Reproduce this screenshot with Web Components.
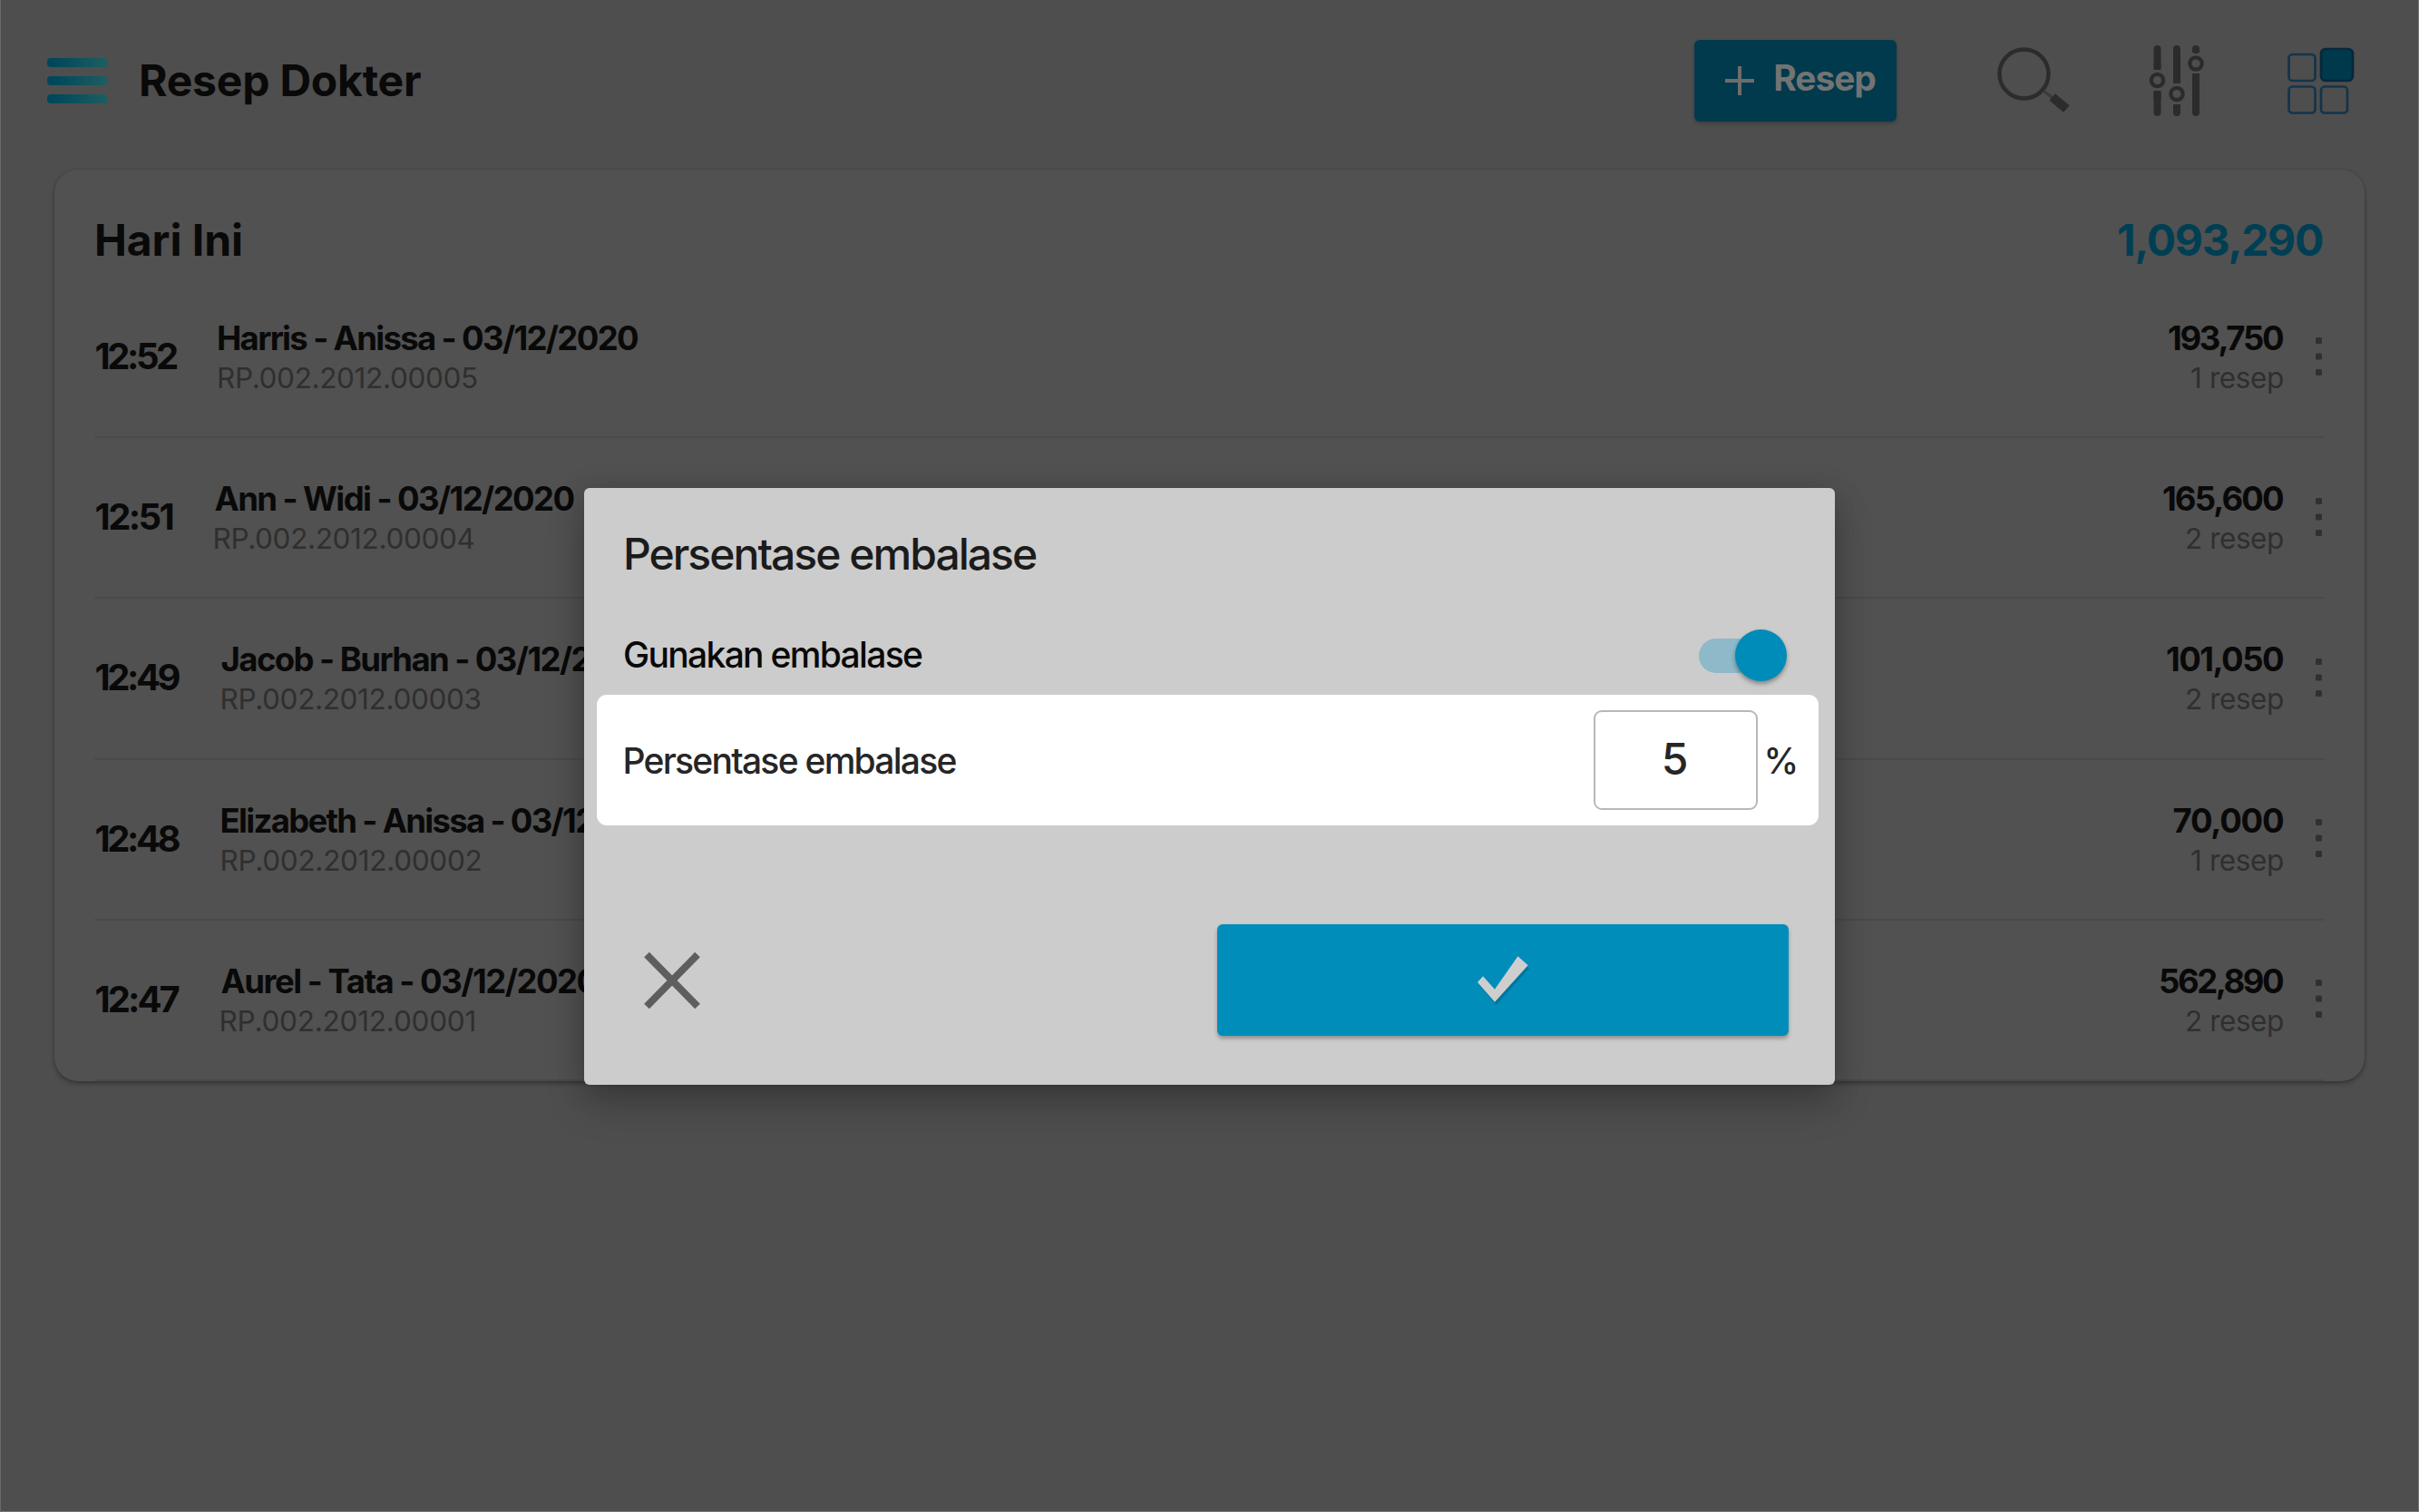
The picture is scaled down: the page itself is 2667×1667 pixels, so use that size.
<!DOCTYPE html>
<html lang="id">
<head>
<meta charset="utf-8">
<title>Resep Dokter</title>
<style>
    body {
        margin: 0;
        background: #4e4e4e;
        color: #090909;
        font-family: Inter, "Open Sans", sans-serif;
        overflow: hidden;
    }
</style>
</head>
<body>
<resep-app></resep-app>

<script>
"use strict";

// shadow rootを作ってマークアップを入れる共通クラス
class BaseElement extends HTMLElement {
    connectedCallback() {
        if (this.shadowRoot) return;
        this.attachShadow({mode: "open"});
        this.shadowRoot.innerHTML = this.render();
        this.ready();
    }

    ready() {}
}


// 文字列を指定した幅にぴったり収めるラベル
// w属性は文字の左端から右端までの幅
customElements.define("fit-text", class extends BaseElement {
    render() {
        return `
            <style>
                :host { display: block; flex: none; white-space: nowrap; }
                span { display: block; }
            </style>
            <span><slot></slot></span>`;
    }

    ready() {
        const width = Number(this.getAttribute("w"));
        const text = this.textContent;
        const style = getComputedStyle(this);
        const ctx = document.createElement("canvas").getContext("2d");
        ctx.font = `${style.fontWeight} ${style.fontSize} ${style.fontFamily}`;
        const m = ctx.measureText(text);
        const ink = m.actualBoundingBoxLeft + m.actualBoundingBoxRight;
        const span = this.shadowRoot.querySelector("span");
        this.style.width = `${width}px`;
        span.style.marginLeft = `${m.actualBoundingBoxLeft}px`;
        if (text.length > 1) {
            span.style.letterSpacing = `${(width - ink) / (text.length - 1)}px`;
        }
    }
});


// アイコン
const icons = {
    menu: `<svg width="67" height="50" viewBox="0 0 67 50">
        <defs><linearGradient id="g"><stop offset="0.1" stop-color="#00475b"/><stop offset="1" stop-color="#1d5f60"/></linearGradient></defs>
        <g fill="url(#g)"><rect width="67" height="10" rx="4"/><rect y="20" width="67" height="10" rx="4"/><rect y="40" width="67" height="10" rx="4"/></g></svg>`,
    plus: `<svg width="32" height="32" viewBox="0 0 32 32"><path d="M16 0v32M0 16h32" stroke="#6d6d6d" stroke-width="4"/></svg>`,
    search: `<svg width="80" height="78" viewBox="0 0 80 78">
        <circle cx="29.5" cy="31.5" r="27" fill="none" stroke="#2c2c2c" stroke-width="4.4"/>
        <path d="M51 50l10 8" stroke="#3b3b3b" stroke-width="3"/>
        <path d="M63.8 53.3l16 13-6.8 7.5-15.5-13z" fill="#2c2c2c"/></svg>`,
    sliders: `<svg width="60" height="78" viewBox="0 0 60 78" fill="none" stroke="#2b2b2b">
        <path d="M8.5 4v19M8.5 54v20M30 4v34M30 69v5M51 4v1M51 35v39" stroke-width="8" stroke-linecap="round"/>
        <path d="M8.5 20v7M8.5 50v10M30 30v12M30 65v6M51 4v4M51 31v9" stroke-width="8"/>
        <g stroke-width="4.2"><circle cx="8.5" cy="38.5" r="6.7"/><circle cx="30" cy="53.5" r="6.7"/><circle cx="51" cy="20" r="6.7"/></g></svg>`,
    grid: `<svg width="74" height="74" viewBox="0 0 74 74" fill="none" stroke="#14344b" stroke-width="2.7">
        <rect x="1.5" y="8" width="29" height="29" rx="4"/><rect x="1.5" y="43.5" width="29" height="29" rx="4"/>
        <rect x="37" y="43.5" width="29" height="29" rx="4"/><rect x="37" y="2" width="35" height="35" rx="5" fill="#00394c" stroke="#07283b"/></svg>`,
    dots: `<svg width="7" height="42" viewBox="0 0 7 42" fill="#303030"><rect width="7" height="7" rx="1.5"/><rect y="17.5" width="7" height="7" rx="1.5"/><rect y="35" width="7" height="7" rx="1.5"/></svg>`,
    close: `<svg width="64" height="66" viewBox="0 0 64 66"><path d="M4 4.500l56 57M60 4.500l-56 57" stroke="#5e5e5e" stroke-width="8"/></svg>`,
    check: `<svg width="60" height="56" viewBox="0 0 60 56">
        <path d="M4 33.500l5.500-6L22.500 40 47.500 4 59 14.500 22.500 55z" fill="#00688a" opacity=".65"/>
        <path d="M2 30l6-6.700L21 37.700 46.500 1.300 57.700 11.300 21 51.700z" fill="#cecece"/></svg>`
};

customElements.define("app-icon", class extends BaseElement {
    render() {
        return `
            <style>
                :host { display: block; flex: none; }
                svg { display: block; overflow: visible; }
            </style>
            ${icons[this.getAttribute("name")]}`;
    }
});


// 上部のバー
customElements.define("top-bar", class extends BaseElement {
    render() {
        return `
            <style>
                :host {
                    display: flex;
                    align-items: center;
                    box-sizing: border-box;
                    height: 177px;
                    padding: 0 71px 0 52px;
                }
                .title { margin-left: 37px; padding-top: 1px; font-size: 48px; font-weight: 700; line-height: 60px; }
                button {
                    display: flex;
                    align-items: center;
                    gap: 23px;
                    width: 223px;
                    height: 90px;
                    margin: 0 111px 0 auto;
                    padding: 0 0 0 34px;
                    border: 0;
                    border-radius: 6px;
                    background: #003a4c;
                    box-shadow: 0 2px 4px rgba(0, 0, 0, .25);
                    color: #737373;
                    font: 700 39px/48px Inter, sans-serif;
                }
                .label { margin-top: -5px; }
                .sliders { margin-left: 88px; }
                .grid { margin-left: 92px; }
            </style>
            <app-icon name="menu"></app-icon>
            <fit-text class="title" w="308">Resep Dokter</fit-text>
            <button><app-icon name="plus"></app-icon><fit-text class="label" w="111">Resep</fit-text></button>
            <app-icon name="search"></app-icon>
            <app-icon class="sliders" name="sliders"></app-icon>
            <app-icon class="grid" name="grid"></app-icon>`;
    }
});


// 一日分のカード
customElements.define("day-card", class extends BaseElement {
    render() {
        return `
            <style>
                :host {
                    display: block;
                    box-sizing: border-box;
                    height: 1005px;
                    margin: 10px 60px 0;
                    padding: 0 44px;
                    border-radius: 26px;
                    background: #515151;
                    box-shadow: 0 3px 5px rgba(0, 0, 0, .28), 0 0 3px rgba(0, 0, 0, .15);
                }
                header {
                    display: flex;
                    justify-content: space-between;
                    box-sizing: border-box;
                    height: 119px;
                    padding: 47px 2px 0 3px;
                    font-size: 48px;
                    font-weight: 700;
                    line-height: 61px;
                }
                .total { color: #003f53; }
            </style>
            <header>
                <fit-text w="159">Hari Ini</fit-text>
                <fit-text class="total" w="225">1,093,290</fit-text>
            </header>
            <slot></slot>`;
    }
});


// 処方箋の行
customElements.define("resep-row", class extends BaseElement {
    render() {
        // 各値は「文字列|幅」の形
        const label = (name) => {
            const [text, w] = this.getAttribute(name).split("|");
            return `<fit-text class="${name}" w="${w}">${text}</fit-text>`;
        };
        return `
            <style>
                :host {
                    display: flex;
                    box-sizing: border-box;
                    height: 177.2px;
                    padding: 45px 3px 0 1.5px;
                    border-bottom: 2px solid #4a4a4a;
                    line-height: 44px;
                }
                .time { font-size: 40px; font-weight: 700; line-height: 84px; }
                .info { margin-left: 46px; }
                .name, .amount { font-size: 36.5px; font-weight: 700; }
                .code, .count { font-size: 31.5px; color: #2f2f2f; }
                .sum { display: flex; flex-direction: column; align-items: flex-end; margin-left: auto; }
                app-icon { margin: 20.5px 0 0 36px; }
            </style>
            ${label("time")}
            <div class="info">${label("name")}${label("code")}</div>
            <div class="sum">${label("amount")}${label("count")}</div>
            <app-icon name="dots"></app-icon>`;
    }
});


// スイッチ
customElements.define("toggle-switch", class extends BaseElement {
    render() {
        return `
            <style>
                :host {
                    display: flex;
                    align-items: center;
                    width: 97px;
                    height: 57px;
                }
                .track { flex: 1; height: 38px; margin-right: -30px; border-radius: 19px; background: #8db9c8; }
                .thumb {
                    width: 57px;
                    height: 57px;
                    border-radius: 50%;
                    background: #008cb8;
                    box-shadow: 0 3px 5px rgba(0, 0, 0, .35);
                }
            </style>
            <div class="track"></div><div class="thumb"></div>`;
    }
});


// 手前に出るダイアログ
customElements.define("embalase-dialog", class extends BaseElement {
    render() {
        return `
            <style>
                :host {
                    position: absolute;
                    left: 644px;
                    top: 538px;
                    box-sizing: border-box;
                    width: 1379px;
                    height: 658px;
                    border-radius: 6px;
                    background: #ccc;
                    box-shadow: 0 22px 44px rgba(0, 0, 0, .2), 0 4px 34px rgba(0, 0, 0, .16);
                }
                h2 { margin: 0; padding: 42px 0 0 46px; color: #1b1b1b; font-size: 48px; font-weight: 500; line-height: 61px; }
                .line { display: flex; align-items: center; justify-content: space-between; font-size: 39px; font-weight: 500; }
                .use { height: 57px; margin: 53px 53.5px 0 45px; }
                .use fit-text { margin-top: -3px; }
                .percent {
                    box-sizing: border-box;
                    width: 1347px;
                    height: 144px;
                    margin: 15px 0 0 13.5px;
                    padding: 0 25px 0 32px;
                    border-radius: 11px;
                    background: #fff;
                    color: #262626;
                }
                .field { display: flex; align-items: center; gap: 11px; }
                .box {
                    display: flex;
                    align-items: center;
                    justify-content: center;
                    box-sizing: border-box;
                    width: 180.5px;
                    height: 110px;
                    padding-bottom: 3px;
                    border: 2px solid #b8b8b8;
                    border-radius: 9px;
                    font-size: 48px;
                }
                .actions {
                    display: flex;
                    align-items: center;
                    justify-content: space-between;
                    height: 123px;
                    margin: 109px 51.5px 0 64.5px;
                }
                .ok {
                    display: flex;
                    align-items: center;
                    justify-content: center;
                    width: 630px;
                    height: 123px;
                    padding: 0;
                    border: 0;
                    border-radius: 6px;
                    background: #008db9;
                    box-shadow: 0 3px 4px rgba(0, 0, 0, .3);
                }
            </style>
            <h2><fit-text w="453">Persentase embalase</fit-text></h2>
            <div class="line use">
                <fit-text w="328">Gunakan embalase</fit-text>
                <toggle-switch></toggle-switch>
            </div>
            <div class="line percent">
                <fit-text w="365">Persentase embalase</fit-text>
                <div class="field">
                    <div class="box"><fit-text w="25">5</fit-text></div>
                    <fit-text w="31">%</fit-text>
                </div>
            </div>
            <div class="actions">
                <app-icon name="close"></app-icon>
                <button class="ok"><app-icon name="check"></app-icon></button>
            </div>`;
    }
});


// 画面全体
customElements.define("resep-app", class extends BaseElement {
    render() {
        return `
            <style>
                :host {
                    display: block;
                    position: relative;
                    width: 2667px;
                    height: 1667px;
                    box-shadow: inset 1px 0 #696969, inset -1px -1px #777;
                }
            </style>
            <top-bar></top-bar>
            <day-card>
                <resep-row time="12:52|89.5" name="Harris - Anissa - 03/12/2020|462" code="RP.002.2012.00005|285" amount="193,750|126" count="1 resep|101"></resep-row>
                <resep-row time="12:51|85" name="Ann - Widi - 03/12/2020|396" code="RP.002.2012.00004|286" amount="165,600|132" count="2 resep|106"></resep-row>
                <resep-row time="12:49|93" name="Jacob - Burhan - 03/12/2020|474" code="RP.002.2012.00003|285" amount="101,050|128" count="2 resep|106"></resep-row>
                <resep-row time="12:48|93" name="Elizabeth - Anissa - 03/12/2020|512" code="RP.002.2012.00002|285" amount="70,000|120.5" count="1 resep|101"></resep-row>
                <resep-row time="12:47|92" name="Aurel - Tata - 03/12/2020|415" code="RP.002.2012.00001|280" amount="562,890|135" count="2 resep|106"></resep-row>
            </day-card>
            <embalase-dialog></embalase-dialog>`;
    }
});
</script>
</body>
</html>
